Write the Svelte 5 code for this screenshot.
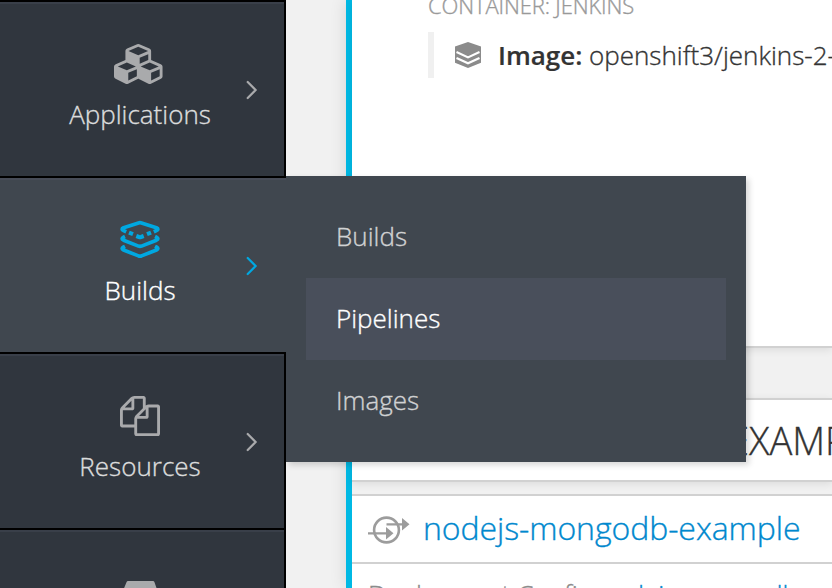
<script>
  const cubes = "M640 1632l384-192v-314l-384 164v342zm-64-454l404-173-404-173-404 173zm1088 454l384-192v-314l-384 164v342zm-64-454l404-173-404-173-404 173zm-448-293l384-165v-266l-384 164v267zm-64-379l441-189-441-189-441 189zm1088 518v416q0 36-19 67t-52 47l-448 224q-25 14-57 14t-57-14l-448-224q-5-2-7-4-2 2-7 4l-448 224q-25 14-57 14t-57-14l-448-224q-33-16-52-47t-19-67v-416q0-38 21.500-70t56.500-48l434-186v-400q0-38 21.500-70t56.500-48l448-192q23-10 50-10t50 10l448 192q35 16 56.500 48t21.500 70v400l434 186q36 16 57 48t21 70z";
  const files = "M1696 384q40 0 68 28t28 68v1216q0 40-28 68t-68 28h-960q-40 0-68-28t-28-68v-288h-544q-40 0-68-28t-28-68v-672q0-40 20-88t48-76l408-408q28-28 76-48t88-20h416q40 0 68 28t28 68v328q68-40 128-40h416zm-544 213l-299 299h299v-299zm-640-384l-299 299h299v-299zm196 647l316-316v-416h-384v416q0 40-28 68t-68 28h-416v640h512v-256q0-40 20-88t48-76zm956 804v-1152h-384v416q0 40-28 68t-68 28h-416v640h896z";
  const items = [
    { id: 'apps', label: 'Applications' },
    { id: 'builds', label: 'Builds', active: true },
    { id: 'resources', label: 'Resources' },
    { id: 'storage', label: '' }
  ];
  const menu = ['Builds', 'Pipelines', 'Images'];
</script>

<div class="page">
  <nav class="sidebar">
    {#each items as item}
      <div class="item {item.id}" class:active={item.active}>
        <div class="icon">
          {#if item.id === 'apps'}
            <svg width="51.4" height="40" viewBox="0 0 2304 1792"><path fill="currentColor" d={cubes} /></svg>
          {:else if item.id === 'resources'}
            <svg width="40" height="40" viewBox="0 0 1792 1792"><path fill="currentColor" d={files} /></svg>
          {:else if item.id === 'builds'}
            <svg width="40" height="40" viewBox="0 0 40 40" fill="none" stroke="currentColor" stroke-width="3.7" stroke-linejoin="round">
              <path d="M6.200 11.800L3.600 10.600Q.6 9.200 3.600 7.800L18.500 2.900Q20 2.400 21.500 2.900L36.400 7.800Q39.400 9.200 36.400 10.600L33.800 11.800" />
              <path d="M9 12.600L13 14.200M16.300 16L19 17Q20 17.300 21 17L23.700 16M27 14.200L31 12.600" stroke-width="4" />
              <path d="M5 16.500L3.600 17.200Q.6 18.700 3.600 20.200L18.500 26.100Q20 26.600 21.500 26.100L36.400 20.200Q39.400 18.700 36.400 17.200L35 16.500" />
              <path d="M5 26.300L3.600 27Q.6 28.500 3.600 30L18.500 35.900Q20 36.400 21.500 35.900L36.400 30Q39.400 28.500 36.400 27L35 26.300" />
            </svg>
          {:else}
            <svg width="40" height="40" viewBox="0 0 40 40"><path fill="currentColor" d="M8 9h25q1 0 1.400 1L40 26v12H0V26L6.600 10Q7 9 8 9z" /></svg>
          {/if}
        </div>
        <span class="label">{item.label}</span>
        {#if item.label}
          <svg class="chev" width="12" height="20" viewBox="0 0 12 20"><path d="M1.700 2L9.600 10L1.700 18" fill="none" stroke="currentColor" stroke-width="2.200" stroke-linecap="round" /></svg>
        {/if}
      </div>
    {/each}
  </nav>

  <main>
    <section class="card pod">
      <div class="container-name"><span>CONTAINER: JENKINS</span></div>
      <div class="image-row">
        <svg width="26" height="26" viewBox="0 0 26 26" fill="#8b8b8b">
          <path d="M13 0L26 4.500V10L13 15.200L0 10V4.500z" />
          <path d="M0 8L13 14.500L26 8V20.700L13 26L0 20.700z" />
          <path d="M1.500 10.100L13 15.400L24.500 10.100M1.500 16L13 21.300L24.500 16" fill="none" stroke="#fff" stroke-width="2.200" />
        </svg>
        <b>Image:</b><span class="image">openshift3/jenkins-2-</span>
      </div>
    </section>
    <section class="card heading"><h2>EXAMPLE</h2></section>
    <section class="card deploy">
      <header>
        <svg width="42" height="30" viewBox="0 0 42 30" fill="#9c9c9c">
          <circle cx="18.500" cy="15" r="12.400" fill="none" stroke="#9c9c9c" stroke-width="2.600" />
          <path d="M0 17.300H18V12L25.500 18.300L18 24.500V19.500H0zM18.500 8.300H34V3L41.500 9.300L34 15.500V10.500H18.500z" />
        </svg>
        <span class="link name">nodejs-mongodb-example</span>
      </header>
      <p>Deployment Config <span class="link">nodejs-mongodb</span></p>
    </section>
  </main>

  <div class="flyout">
    {#each menu as entry}
      <div class="entry" class:hover={entry === 'Pipelines'}>{entry}</div>
    {/each}
  </div>
</div>

<style>
  .page { position: relative; display: flex; width: 832px; height: 588px; overflow: hidden; background: #f1f1f1; font-family: "Open Sans", sans-serif; font-weight: 300; font-size: 26px; box-sizing: border-box; -webkit-text-stroke: .35px currentColor; }
  .sidebar { position: relative; z-index: 2; width: 284px; flex: none; border-right: 2px solid #000; background: #30363e; }
  .item { position: relative; height: 176px; box-sizing: border-box; border-top: 2px solid #000; box-shadow: inset 0 2px #393f49; padding-top: 42px; display: flex; flex-direction: column; align-items: center; color: #a9aaac; }
  .active { background: #40474f; color: #00a8e1; box-shadow: inset 0 2px #474c57; width: 286px; padding-right: 2px; }
  .icon { height: 40px; padding-right: 4px; }
  .apps .icon { padding-right: 5px; }
  .icon svg { display: block; }
  .label { color: #dcdddd; line-height: 36px; margin-top: 12px; padding-right: 4px; white-space: nowrap; }
  .active .label { color: #fff; }
  .chev { position: absolute; left: 246px; top: 78px; }
  main { margin-left: 60px; flex: none; width: 480px; border-left: 6px solid #00b9e4; box-shadow: 0 0 16px rgba(0,0,0,.12); }
  .card { background: #fff; box-sizing: border-box; white-space: nowrap; color: #333; }
  .pod { height: 348px; border-bottom: 2px solid #d1d1d1; box-shadow: 0 2px 8px rgba(0,0,0,.09); padding-left: 76px; }
  .container-name { height: 32px; font-size: 22px; line-height: 32px; color: #999; letter-spacing: -.12px; }
  .container-name span { position: relative; top: -11px; }
  .image-row { height: 46px; border-left: 6px solid #f0f0f0; padding-left: 21px; display: flex; align-items: center; line-height: 48px; }
  svg { flex: none; }
  b { font-weight: 600; margin-left: 17px; width: 91px; flex: none; -webkit-text-stroke: .2px currentColor; }
  .heading { margin-top: 50px; height: 84px; border-top: 2px solid #d1d1d1; border-bottom: 2px solid #d1d1d1; box-shadow: 0 2px 8px rgba(0,0,0,.09); padding-left: 376px; }
  h2 { margin: 0; font-weight: 300; font-size: 38px; line-height: 80px; }
  .deploy { margin-top: 12px; height: 94px; border-top: 2px solid #d1d1d1; }
  header { height: 66px; border-bottom: 2px solid #d1d1d1; display: flex; align-items: center; padding-left: 16px; }
  header svg { position: relative; top: 1px; }
  .link { color: #0088ce; }
  .name { font-size: 32px; line-height: 44px; margin: 0 0 2px 13px; letter-spacing: -.07px; }
  p { margin: 12px 0 0 16px; line-height: 36px; color: #8b8b8b; }
  .flyout { position: absolute; left: 286px; top: 176px; width: 460px; height: 286px; box-sizing: border-box; padding: 20px; background: #40474f; box-shadow: 3px 3px 6px rgba(0,0,0,.16); }
  .entry { height: 82px; line-height: 80px; padding-left: 30px; color: #d1d2d3; }
  .hover { background: #494f5b; color: #fff; }
</style>
